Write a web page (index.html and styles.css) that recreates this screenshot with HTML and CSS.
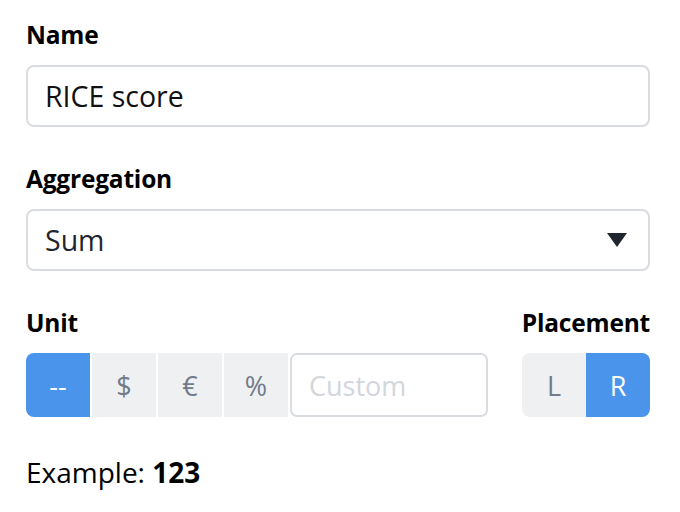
FILE: index.html
```html
<!DOCTYPE html>
<html>
<head>
<meta charset="utf-8">
<link rel="stylesheet" href="styles.css">
</head>
<body>
<div class="form">
  <div class="field">
    <div class="label">Name</div>
    <div class="input">RICE score</div>
  </div>
  <div class="field">
    <div class="label">Aggregation</div>
    <div class="input select">
      <span>Sum</span>
      <svg class="caret" width="20" height="14" viewBox="0 0 20 14"><path d="M0 0H20L10 14Z" fill="#1f2630"/></svg>
    </div>
  </div>
  <div class="row">
    <div class="group">
      <div class="label">Unit</div>
      <div class="seg">
        <div class="btn active first">--</div>
        <div class="btn">$</div>
        <div class="btn">€</div>
        <div class="btn">%</div>
        <div class="custom">Custom</div>
      </div>
    </div>
    <div class="group right">
      <div class="label">Placement</div>
      <div class="seg tight">
        <div class="btn first">L</div>
        <div class="btn active last">R</div>
      </div>
    </div>
  </div>
  <div class="example">Example: <b>123</b></div>
</div>
</body>
</html>
```
FILE: styles.css
```css
* { box-sizing: border-box; }
body {
  margin: 0;
  background: #fff;
  font-family: "Open Sans", "Noto Sans", sans-serif;
  color: #000;
}
.form {
  width: 624px;
  margin-left: 26px;
  padding-top: 19px;
}
.field { margin-bottom: 36px; }
.label {
  font-size: 24.5px;
  font-weight: 700;
  line-height: 32px;
  margin-bottom: 14px;
  letter-spacing: -0.2px;
}
.input {
  height: 62px;
  border: 2px solid #d9dce0;
  border-radius: 8px;
  padding: 0 17px;
  display: flex;
  align-items: center;
  font-size: 28.5px;
  color: #111;
}
.select { justify-content: space-between; color: #1f2630; padding-right: 21px; }
.caret { display: block; }
.row {
  display: flex;
  justify-content: space-between;
  margin-top: 35px;
}
.group { display: flex; flex-direction: column; }
.group.right { align-items: flex-end; }
.seg { display: flex; gap: 2px; }
.seg.tight { gap: 0; }
.btn {
  width: 64px;
  height: 64px;
  background: #eff0f2;
  color: #717b89;
  font-size: 27px;
  display: flex;
  align-items: center;
  justify-content: center;
}
.btn.active { background: #4a94ec; color: #fff; }
.btn.first { border-radius: 8px 0 0 8px; }
.btn.last { border-radius: 0 8px 8px 0; }
.custom {
  width: 198px;
  height: 64px;
  border: 2px solid #d9dce0;
  border-radius: 7px;
  padding: 0 17px;
  display: flex;
  align-items: center;
  font-size: 27px;
  color: #d3d6db;
}
.example {
  margin-top: 36px;
  font-size: 28px;
  color: #000;
}
.example b { font-weight: 700; }
```
